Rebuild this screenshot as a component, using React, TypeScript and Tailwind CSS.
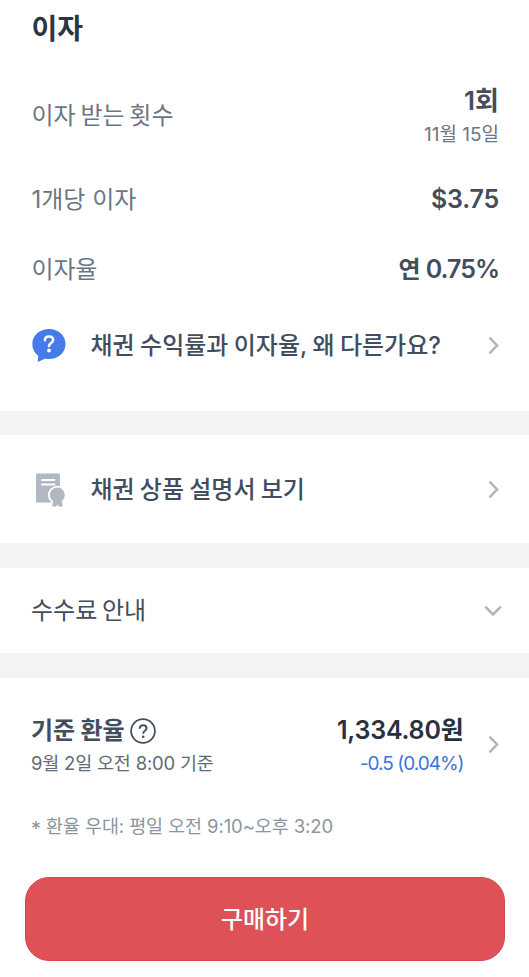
function Chevron({ down = false }: { down?: boolean }) {
  return (
    <svg width="18" height="18" viewBox="0 0 18 18" fill="none" stroke="#b0b6bf" strokeWidth="2.5" className="shrink-0">
      {down ? <path d="M1.2 4.6 9 12.400l7.800-7.800" /> : <path d="m5.500.7 7.600 7.800-7.600 7.800" />}
    </svg>
  );
}

function BubbleIcon() {
  return (
    <svg width="34" height="34" viewBox="0 0 34 34" className="shrink-0">
      <path fill="#467cea" d="M17 0C7.6 0 .3 6.4.3 15c0 5 2.200 9 6 11.700L5.700 33l7.300-3.300c1.300.3 2.600.4 4 .4 9.400 0 16.500-6.500 16.500-15.100S26.400 0 17 0Z" />
      <path fill="none" stroke="#fff" strokeWidth="2.5" strokeLinecap="round" d="M12.900 11.200c.1-2.300 1.800-3.600 4.100-3.600 2.400 0 4.100 1.300 4.100 3.500 0 3.100-4.100 3.200-4.100 5.800" />
      <circle cx="17" cy="21.500" r="1.900" fill="#fff" />
    </svg>
  );
}

function DocumentIcon() {
  return (
    <svg width="34" height="34" viewBox="0 0 34 34" className="shrink-0">
      <rect x="5" y=".5" width="24" height="29" rx="1.500" fill="#b0b8c1" />
      <path stroke="#fff" strokeWidth="2" strokeLinecap="round" d="M11 7h12.500M11 11.500h12.500" />
      <circle cx="26.300" cy="22" r="9.300" fill="#fff" />
      <path fill="#b0b8c1" d="m22.500 26-1.400 7.500h4l1.200-2 1.200 2h4.400L30.200 26Z" />
      <circle cx="26.300" cy="22" r="7.500" fill="#b0b8c1" />
    </svg>
  );
}

function HelpIcon() {
  return (
    <svg width="26" height="26" viewBox="0 0 26 26" fill="none" stroke="#434d5d" className="mb-px ml-1.5 shrink-0">
      <circle cx="13" cy="13" r="11.900" strokeWidth="1.700" />
      <path strokeWidth="1.900" d="M9.700 10.700c.1-2.200 1.500-3.400 3.500-3.400 2 0 3.400 1.100 3.400 2.900 0 2.600-3.400 2.500-3.400 5.200v.4" />
      <circle cx="13.200" cy="18.700" r="1.300" fill="#434d5d" stroke="none" />
    </svg>
  );
}

export default function App() {
  return (
    <main className="h-[977px] w-full overflow-hidden bg-white pt-[2px] font-['Inter','Noto_Sans_CJK_KR',sans-serif] text-2xl whitespace-nowrap text-[#434d5d]">
      <section className="h-[409px] pr-[30px] pl-[31.500px]">
        <h1 className="flex h-[55px] items-center text-[28px] font-bold text-[#2c3544]">이자</h1>
        <div className="mt-6 flex h-[72px] items-center justify-between">
          <span className="pb-[2px] text-[#6b7684] [word-spacing:-2px]">이자 받는 횟수</span>
          <div className="text-right">
            <div className="h-9 text-[26px] leading-9 font-semibold">1회</div>
            <div className="h-8 text-[19px] leading-8 text-[#6b7684]">11월 15일</div>
          </div>
        </div>
        <div className="mt-[13px] flex h-[68px] items-center justify-between">
          <span className="text-[#6b7684]">1개당 이자</span>
          <span className="text-[25px] font-semibold tracking-[-0.2px]">$3.75</span>
        </div>
        <div className="mt-px flex h-[70px] items-center justify-between">
          <span className="text-[#6b7684] tracking-[-0.2px]">이자율</span>
          <span className="text-[25px] font-semibold tracking-[-1px]"><span className="text-2xl tracking-[-0.2px]">연</span> 0.75%</span>
        </div>
        <div className="-mr-[2.500px] flex h-[82px] items-center">
          <BubbleIcon />
          <span className="ml-[25px] flex-1 font-medium [word-spacing:-1px]">채권 수익률과 이자율, 왜 다른가요?</span>
          <Chevron />
        </div>
      </section>
      <div className="h-6 bg-[#f2f3f5]" />
      <section className="flex h-[108px] items-center pt-[2px] pr-[27.500px] pl-[31px]">
        <DocumentIcon />
        <span className="ml-[25.500px] flex-1 font-medium [word-spacing:-1.200px]">채권 상품 설명서 보기</span>
        <Chevron />
      </section>
      <div className="h-[25px] bg-[#f2f3f5]" />
      <section className="flex h-[85px] items-center justify-between pr-[27px] pl-[31px]">
        <span className="[word-spacing:-2px]">수수료 안내</span>
        <Chevron down />
      </section>
      <div className="h-[25px] bg-[#f2f3f5]" />
      <section className="h-[199px] px-[31px] pt-[35px]">
        <div className="-mr-[3.500px] flex items-center">
          <div className="flex-1">
            <div className="flex h-9 items-center font-semibold tracking-[-0.2px]">기준 환율<HelpIcon /></div>
            <div className="h-7 text-[18.500px] leading-7 tracking-[-0.2px] text-[#5f6b7a]">9월 2일 오전 8:00 기준</div>
          </div>
          <div className="mr-5 text-right">
            <div className="h-9 text-[25px] leading-[35px] font-semibold tracking-[-0.2px] text-[#29313f]">1,334.80원</div>
            <div className="h-7 text-[19px] leading-[29px] tracking-[-1px] text-[#3a73dc]">-0.5 (0.04%)</div>
          </div>
          <Chevron />
        </div>
        <p className="mt-[33px] h-8 text-[18.500px] leading-8 tracking-[-0.1px] text-[#8b95a1]"><span className="inline-block translate-y-[3px] text-[20px] leading-none">*</span> 환율 우대: 평일 오전 9:10~오후 3:20</p>
      </section>
      <button className="mx-[25px] flex h-[84px] w-[480px] items-center justify-center rounded-3xl border border-[#d5484f] bg-[#dd5157] pt-px font-medium text-white">구매하기</button>
    </main>
  );
}
